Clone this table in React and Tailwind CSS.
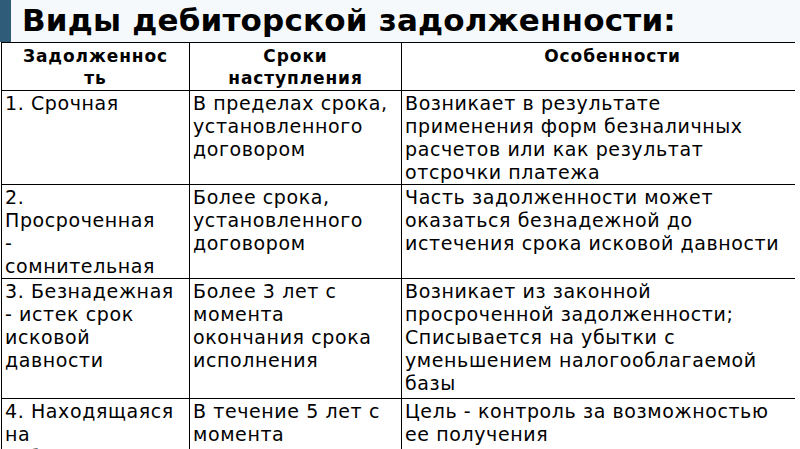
import React from 'react';

const rows = [
  {
    h: 'h-[94px]',
    a: ['1. Срочная'],
    b: ['В пределах срока,', 'установленного', 'договором'],
    c: ['Возникает в результате', 'применения форм безналичных', 'расчетов или как результат', 'отсрочки платежа'],
  },
  {
    h: 'h-[93px]',
    a: ['2.', 'Просроченная', '-', 'сомнительная'],
    b: ['Более срока,', 'установленного', 'договором'],
    c: ['Часть задолженности может', 'оказаться безнадежной до', 'истечения срока исковой давности'],
  },
  {
    h: 'h-[120px]',
    a: ['3. Безнадежная', '- истек срок', 'исковой', 'давности'],
    b: ['Более 3 лет с', 'момента', 'окончания срока', 'исполнения'],
    c: ['Возникает из законной', 'просроченной задолженности;', 'Списывается на убытки с', 'уменьшением налогооблагаемой', 'базы'],
  },
  {
    h: 'h-[80px]',
    a: ['4. Находящаяся', 'на', 'забалансовом'],
    b: ['В течение 5 лет с', 'момента'],
    c: ['Цель - контроль за возможностью', 'ее получения'],
  },
];

const Lines = ({ items }) =>
  items.map((t, i) => (
    <div key={i} className="whitespace-nowrap">
      {t}
    </div>
  ));

const App = () => {
  return (
    <div className="w-[800px] h-[449px] overflow-hidden bg-white font-['DejaVu_Sans',sans-serif] text-black">
      {/* Title band */}
      <div className="flex h-[42px]">
        <div className="w-[11px] bg-[#2e5c79]"></div>
        <div className="flex-1 bg-[#f5f9fb] pl-[11px] pt-[1px]">
          <h1 className="text-[31px] font-bold leading-[38px] tracking-[0.2px]">
            Виды дебиторской задолженности:
          </h1>
        </div>
      </div>

      {/* Table */}
      <table className="ml-[1px] w-[794px] border-collapse table-fixed text-[19px] leading-[23px] tracking-[0.6px]">
        <colgroup>
          <col className="w-[188px]" />
          <col className="w-[212px]" />
          <col />
        </colgroup>
        <thead>
          <tr className="h-[48px]">
            <th className="border border-black border-r-0 align-top px-[2px] pt-[2px] text-[17px] leading-[22px] tracking-[0.9px] font-bold">
              <div>Задолженнос</div>
              <div>ть</div>
            </th>
            <th className="border border-black align-top px-[2px] pt-[2px] text-[17px] leading-[22px] tracking-[0.9px] font-bold">
              <div>Сроки</div>
              <div>наступления</div>
            </th>
            <th className="border-t border-b border-black align-top pl-[28px] pt-[2px] text-[17px] leading-[22px] tracking-[0.9px] font-bold">
              Особенности
            </th>
          </tr>
        </thead>
        <tbody>
          {rows.map((r, i) => (
            <tr key={i} className={r.h}>
              <td className="border border-black border-r-0 align-top pl-[3px] pr-0 pt-[1px] overflow-hidden">
                <Lines items={r.a} />
              </td>
              <td className="border border-black align-top pl-[3px] pr-0 pt-[1px] overflow-hidden">
                <Lines items={r.b} />
              </td>
              <td className="border-t border-b border-black align-top pl-[3px] pr-0 pt-[1px] overflow-hidden">
                <Lines items={r.c} />
              </td>
            </tr>
          ))}
        </tbody>
      </table>
    </div>
  );
};

export default App;
